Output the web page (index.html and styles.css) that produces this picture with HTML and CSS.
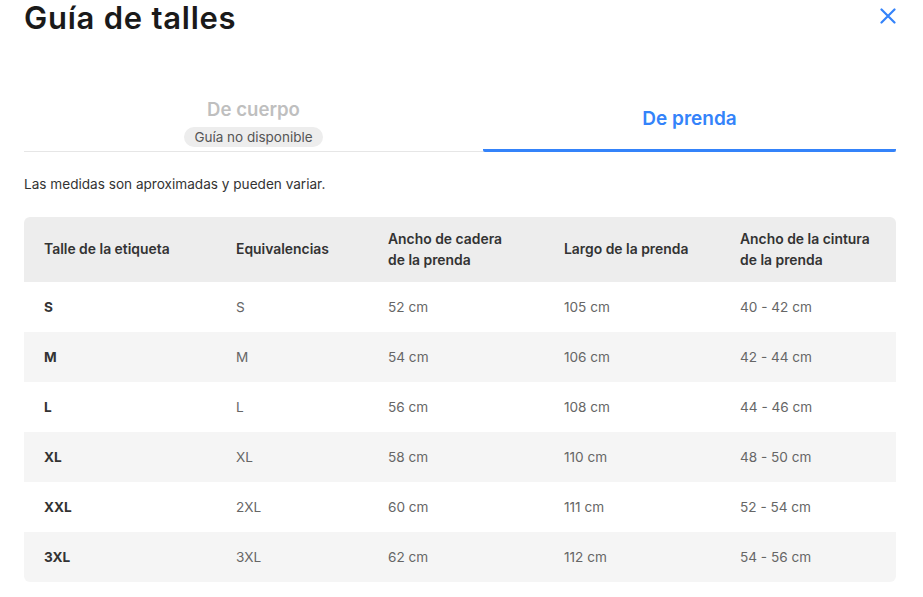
FILE: index.html
```html
<!DOCTYPE html>
<html lang="es">
<head>
<meta charset="utf-8">
<link rel="stylesheet" href="styles.css">
</head>
<body>
<div class="modal">
  <header class="head">
    <h1 class="title">Guía de talles</h1>
    <button class="close" aria-label="Cerrar">
      <svg width="16" height="16" viewBox="0 0 16 16"><path d="M1.5 1.5 L14.5 14.5 M14.5 1.5 L1.5 14.5" stroke="#3483fa" stroke-width="2.2" stroke-linecap="round"/></svg>
    </button>
  </header>
  <nav class="tabs">
    <div class="tab tab-off">
      <span class="tab-label">De cuerpo</span>
      <span class="badge">Guía no disponible</span>
    </div>
    <div class="tab tab-on">
      <span class="tab-label">De prenda</span>
    </div>
  </nav>
  <p class="note">Las medidas son aproximadas y pueden variar.</p>
  <table class="sizes">
    <thead>
      <tr><th>Talle de la etiqueta</th><th>Equivalencias</th><th>Ancho de cadera<br>de la prenda</th><th>Largo de la prenda</th><th>Ancho de la cintura<br>de la prenda</th></tr>
    </thead>
    <tbody>
      <tr><td class="lbl">S</td><td>S</td><td>52 cm</td><td>105 cm</td><td>40 - 42 cm</td></tr>
      <tr><td class="lbl">M</td><td>M</td><td>54 cm</td><td>106 cm</td><td>42 - 44 cm</td></tr>
      <tr><td class="lbl">L</td><td>L</td><td>56 cm</td><td>108 cm</td><td>44 - 46 cm</td></tr>
      <tr><td class="lbl">XL</td><td>XL</td><td>58 cm</td><td>110 cm</td><td>48 - 50 cm</td></tr>
      <tr><td class="lbl">XXL</td><td>2XL</td><td>60 cm</td><td>111 cm</td><td>52 - 54 cm</td></tr>
      <tr><td class="lbl">3XL</td><td>3XL</td><td>62 cm</td><td>112 cm</td><td>54 - 56 cm</td></tr>
    </tbody>
  </table>
</div>
</body>
</html>
```
FILE: styles.css
```css
* { box-sizing: border-box; }
html, body { margin: 0; background: #fff; }
body { font-family: Inter, "Liberation Sans", sans-serif; color: #333; }
.modal { width: 923px; padding: 0 27px 0 24px; }
.head { display: flex; justify-content: space-between; align-items: flex-start; height: 90px; }
.title { margin: 0; padding-top: 1px; font-size: 31px; font-weight: 600; line-height: 33px; color: #1a1a1a; letter-spacing: 0.75px; }
.close { border: 0; background: none; padding: 0; margin: 8px 0 0 0; width: 16px; height: 16px; cursor: pointer; }
.close svg { display: block; }
.tabs { display: grid; grid-template-columns: 459px 413px; border-bottom: 1px solid #e6e6e6; height: 62px; }
.tab { display: flex; flex-direction: column; align-items: center; }
.tab-off .tab-label { color: #bfbfbf; font-size: 18.6px; font-weight: 600; line-height: 22px; margin-top: 8px; }
.badge { margin-top: 7px; background: #ededed; color: #555; font-size: 13.5px; line-height: 20px; padding: 0 10px; border-radius: 10px; }
.tab-on { justify-content: center; border-bottom: 3px solid #3483fa; border-radius: 0 0 2px 2px; margin-bottom: -1px; }
.tab-on .tab-label { color: #3483fa; font-size: 19px; font-weight: 600; line-height: 22px; margin-top: -1px; }
.note { margin: 23px 0 0; font-size: 13.6px; line-height: 18px; color: #333; }
.sizes { margin-top: 24px; width: 872px; border-collapse: separate; border-spacing: 0; table-layout: fixed; font-size: 13.6px; }
.sizes th { background: #ededed; font-weight: 600; text-align: left; color: #333; height: 65px; padding: 0 0 0 20px; line-height: 21px; font-size: 13.9px; }
.sizes th:nth-child(1) { width: 192px; border-top-left-radius: 6px; }
.sizes th:nth-child(2) { width: 152px; }
.sizes th:nth-child(3) { width: 176px; }
.sizes th:nth-child(4) { width: 176px; }
.sizes th:nth-child(5) { border-top-right-radius: 6px; }
.sizes td { height: 50px; padding: 0 0 0 20px; color: #666; }
.sizes td.lbl { color: #333; font-weight: 700; }
.sizes tbody tr:nth-child(even) td { background: #f5f5f5; }
.sizes tbody tr:last-child td:first-child { border-bottom-left-radius: 6px; }
.sizes tbody tr:last-child td:last-child { border-bottom-right-radius: 6px; }
```
